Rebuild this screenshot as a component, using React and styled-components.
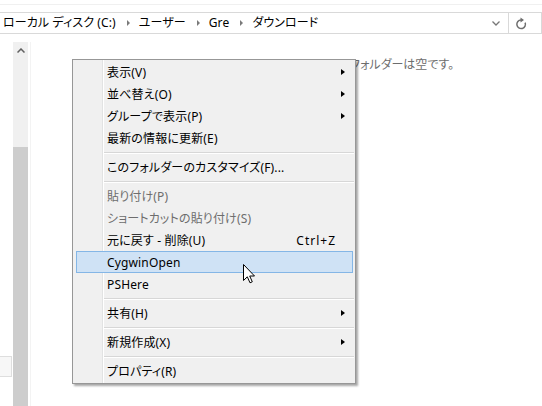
import React from "react";
import styled, { createGlobalStyle } from "styled-components";

const Global = createGlobalStyle`
  html, body { margin: 0; padding: 0; background: #fff; }
  body {
    font-family: "Noto Sans", "Noto Sans CJK JP", sans-serif;
    font-size: 12px;
    font-feature-settings: "palt";
    color: #000;
  }
`;

const Page = styled.div`
  position: relative;
  width: 542px;
  height: 406px;
  overflow: hidden;
  display: flex;
  flex-direction: column;
  background: #fff;
`;

const TopStrip = styled.div`
  height: 4px;
  border-bottom: 1px solid #f0f0f0;
  flex: none;
`;

const AddressRow = styled.div`
  margin-top: 7px;
  height: 22px;
  flex: none;
  display: flex;
`;

const AddressBox = styled.div`
  flex: 1;
  display: flex;
  align-items: stretch;
  box-sizing: border-box;
  border: 1px solid #d9d9d9;
  border-left: none;
  background: #fff;
`;

const Crumbs = styled.div`
  flex: 1;
  display: flex;
  align-items: center;
  padding-left: 3px;
  white-space: nowrap;
  line-height: 20px;
  letter-spacing: 0.1px;
`;

const Crumb = styled.span`
  color: #000;
`;

const CrumbArrow = styled.span`
  width: 0;
  height: 0;
  border-left: 3px solid #7a7a7a;
  border-top: 3px solid transparent;
  border-bottom: 3px solid transparent;
  margin: 0 9px 0 11px;
`;

const DropButton = styled.div`
  width: 20px;
  display: flex;
  align-items: center;
  justify-content: flex-start;
  padding-left: 4px;
  box-sizing: border-box;
`;

const RefreshButton = styled.div`
  width: 33px;
  border-left: 1px solid #d9d9d9;
  display: flex;
  align-items: center;
  padding-left: 6px;
  box-sizing: border-box;
`;

const Body = styled.div`
  flex: 1;
  margin-top: 8px;
  display: flex;
  min-height: 0;
`;

const NavPane = styled.div`
  width: 31px;
  flex: none;
  display: flex;
  border-right: 1px solid #f3f3f3;
  box-sizing: border-box;
`;

const NavLeft = styled.div`
  width: 13px;
  display: flex;
  flex-direction: column;
  justify-content: flex-end;
  padding-bottom: 29px;
  box-sizing: border-box;
`;

const NavItem = styled.div`
  width: 12px;
  height: 21px;
  box-sizing: border-box;
  border: 1px solid #dedede;
  border-left: none;
  background: #f7f7f7;
`;

const Scrollbar = styled.div`
  width: 15px;
  display: flex;
  flex-direction: column;
  background: #f0f0f0;
`;

const ScrollUp = styled.div`
  height: 17px;
  display: flex;
  align-items: center;
  justify-content: center;
`;

const ScrollTrack = styled.div`
  height: 88px;
`;

const ScrollThumb = styled.div`
  flex: 1;
  background: #cdcdcd;
`;

const MainPane = styled.div`
  flex: 1;
  padding: 15px 0 0 297px;
  color: #6d6d6d;
  line-height: 16px;
  white-space: nowrap;
`;

const Menu = styled.div`
  position: absolute;
  left: 72px;
  top: 59px;
  width: 284px;
  box-sizing: border-box;
  border: 1px solid #979797;
  background: #f0f0f0;
  padding: 1px 0;
  box-shadow: 2px 2px 2px rgba(0, 0, 0, 0.35);

  &::before {
    content: "";
    position: absolute;
    left: 29px;
    top: 0;
    bottom: 0;
    width: 1px;
    background: #e2e3e3;
    box-shadow: 1px 0 0 #fff;
  }
`;

const Item = styled.div`
  position: relative;
  height: 22px;
  margin: 0 2px 0 3px;
  box-sizing: border-box;
  border: 1px solid ${(p) => (p.$hot ? "#84b6e6" : "transparent")};
  background: ${(p) => (p.$hot ? "#cfe2f5" : "transparent")};
  display: flex;
  align-items: center;
  padding-left: 30px;
  color: ${(p) => (p.$disabled ? "#6d6d6d" : "#000")};
  white-space: nowrap;
  letter-spacing: 0.15px;
`;

const Label = styled.span`
  flex: 1;
`;

const Shortcut = styled.span`
  letter-spacing: 1px;
`;

const ArrowCell = styled.span`
  width: 16px;
  flex: none;
  display: flex;
  align-items: center;
`;

const SubArrow = styled.span`
  width: 0;
  height: 0;
  margin-left: 5px;
  border-left: 4px solid #000;
  border-top: 3.5px solid transparent;
  border-bottom: 3.5px solid transparent;
`;

const Separator = styled.div`
  height: 1px;
  margin: 3px 1px 3px 29px;
  background: #d7d7d7;
  box-shadow: 0 1px 0 #fff;
`;

const Pointer = styled.svg`
  position: absolute;
  left: 243px;
  top: 264px;
`;

const menu = [
  { label: "表示(V)", sub: true },
  { label: "並べ替え(O)", sub: true },
  { label: "グループで表示(P)", sub: true },
  { label: "最新の情報に更新(E)" },
  "sep",
  { label: "このフォルダーのカスタマイズ(F)..." },
  "sep",
  { label: "貼り付け(P)", disabled: true },
  { label: "ショートカットの貼り付け(S)", disabled: true },
  { label: "元に戻す - 削除(U)", shortcut: "Ctrl+Z" },
  { label: "CygwinOpen", hot: true },
  { label: "PSHere" },
  "sep",
  { label: "共有(H)", sub: true },
  "sep",
  { label: "新規作成(X)", sub: true },
  "sep",
  { label: "プロパティ(R)" },
];

export default function App() {
  return (
    <Page>
      <Global />
      <TopStrip />
      <AddressRow>
        <AddressBox>
          <Crumbs>
            <Crumb>ローカル ディスク (C:)</Crumb>
            <CrumbArrow />
            <Crumb>ユーザー</Crumb>
            <CrumbArrow />
            <Crumb>Gre</Crumb>
            <CrumbArrow />
            <Crumb>ダウンロード</Crumb>
          </Crumbs>
          <DropButton>
            <svg width="8" height="5" viewBox="0 0 8 5">
              <polyline points="0.5,0.5 4,4 7.5,0.5" fill="none" stroke="#777" strokeWidth="1.3" />
            </svg>
          </DropButton>
          <RefreshButton>
            <svg width="12" height="13" viewBox="0 0 12 13">
              <path d="M6 3 A4.3 4.3 0 1 0 10.1 5.6" fill="none" stroke="#6e6e6e" strokeWidth="1.5" />
              <polygon points="5.5,0.5 9,3 5.5,5.5" fill="#6e6e6e" />
            </svg>
          </RefreshButton>
        </AddressBox>
      </AddressRow>
      <Body>
        <NavPane>
          <NavLeft>
            <NavItem />
          </NavLeft>
          <Scrollbar>
            <ScrollUp>
              <svg width="8" height="5" viewBox="0 0 8 5">
                <polyline points="0.5,4.5 4,1 7.5,4.5" fill="none" stroke="#606060" strokeWidth="1.5" />
              </svg>
            </ScrollUp>
            <ScrollTrack />
            <ScrollThumb />
          </Scrollbar>
        </NavPane>
        <MainPane>このフォルダーは空です。</MainPane>
      </Body>
      <Menu>
        {menu.map((m, i) =>
          m === "sep" ? (
            <Separator key={i} />
          ) : (
            <Item key={i} $hot={m.hot} $disabled={m.disabled}>
              <Label>{m.label}</Label>
              {m.shortcut && <Shortcut>{m.shortcut}</Shortcut>}
              <ArrowCell>{m.sub && <SubArrow />}</ArrowCell>
            </Item>
          )
        )}
      </Menu>
      <Pointer width="14" height="21" viewBox="0 0 14 21">
        <path
          d="M0.5 0.5 L0.5 16.5 L4.3 12.8 L7 18.8 L9.3 17.8 L6.7 12 L11.5 12 Z"
          fill="#fff"
          stroke="#000"
          strokeWidth="1"
          strokeLinejoin="miter"
        />
      </Pointer>
    </Page>
  );
}
